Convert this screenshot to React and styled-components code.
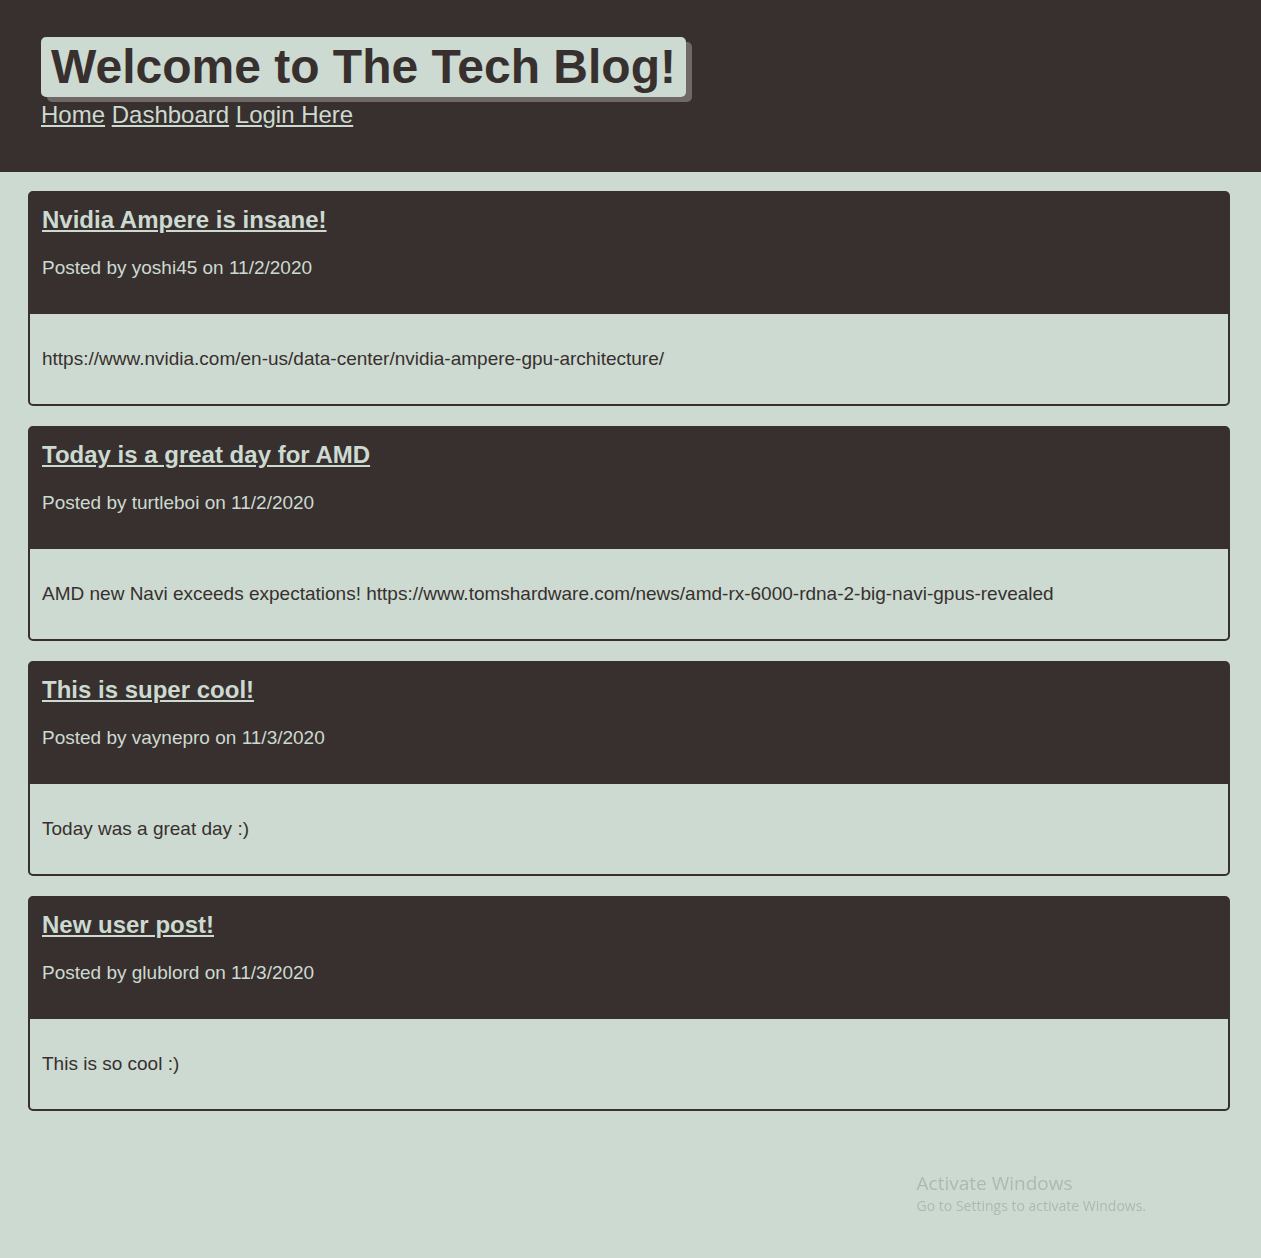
import React from "react";
import styled, { createGlobalStyle } from "styled-components";

const ink = "#38302e";
const sage = "#ccdad1";

const GlobalStyle = createGlobalStyle`
  *, *::before, *::after { box-sizing: border-box; }
  body {
    margin: 0;
    min-height: 100vh;
    background: ${sage};
    color: ${ink};
    font-family: "Liberation Sans", Arial, sans-serif;
  }
`;

const Header = styled.header`
  display: flex;
  flex-direction: column;
  align-items: flex-start;
  padding: 37px 41px 43px;
  background: ${ink};
`;

const SiteTitle = styled.h1`
  margin: 0;
  padding: 2px 10px;
  border-radius: 5px;
  background: ${sage};
  box-shadow: 6px 5px 0 #6f6866;
  font-size: 48px;
  line-height: 56px;
`;

const Nav = styled.nav`
  padding-top: 4px;
  font-size: 24px;
  line-height: 28px;
`;

const NavLink = styled.a`
  color: ${sage};
`;

const Posts = styled.main`
  display: flex;
  flex-direction: column;
  gap: 20px;
  padding: 19px 31px 148px 28px;
`;

const Card = styled.article`
  border: 2px solid ${ink};
  border-radius: 5px;
`;

const CardHeader = styled.header`
  padding: 13px 12px 33px;
  background: ${ink};
  color: ${sage};
`;

const PostTitle = styled.h2`
  margin: 0 0 21px;
  font-size: 24px;
  line-height: 28px;
`;

const PostLink = styled.a`
  color: inherit;
`;

const Meta = styled.p`
  margin: 0;
  font-size: 19px;
  line-height: 26px;
`;

const Body = styled.p`
  margin: 0;
  padding: 32px 12px;
  font-size: 19px;
  line-height: 26px;
  overflow-wrap: anywhere;
`;

const Watermark = styled.aside`
  position: fixed;
  right: 115px;
  bottom: 42px;
  color: #afb8b1;
  font-family: "Open Sans", "Noto Sans", sans-serif;
  pointer-events: none;
`;

const WatermarkTitle = styled.p`
  margin: 0;
  font-size: 19px;
  line-height: 26px;
`;

const WatermarkText = styled.p`
  margin: 0;
  font-size: 14px;
  line-height: 20px;
`;

const links = ["Home", "Dashboard", "Login Here"];

const posts = [
  {
    title: "Nvidia Ampere is insane!",
    author: "yoshi45",
    date: "11/2/2020",
    body: "https://www.nvidia.com/en-us/data-center/nvidia-ampere-gpu-architecture/",
  },
  {
    title: "Today is a great day for AMD",
    author: "turtleboi",
    date: "11/2/2020",
    body: "AMD new Navi exceeds expectations! https://www.tomshardware.com/news/amd-rx-6000-rdna-2-big-navi-gpus-revealed",
  },
  {
    title: "This is super cool!",
    author: "vaynepro",
    date: "11/3/2020",
    body: "Today was a great day :)",
  },
  {
    title: "New user post!",
    author: "glublord",
    date: "11/3/2020",
    body: "This is so cool :)",
  },
];

export default function App() {
  return (
    <>
      <GlobalStyle />
      <Header>
        <SiteTitle>Welcome to The Tech Blog!</SiteTitle>
        <Nav>
          {links.map((label) => (
            <React.Fragment key={label}>
              <NavLink href="#">{label}</NavLink>{" "}
            </React.Fragment>
          ))}
        </Nav>
      </Header>
      <Posts>
        {posts.map(({ title, author, date, body }) => (
          <Card key={title}>
            <CardHeader>
              <PostTitle>
                <PostLink href="#">{title}</PostLink>
              </PostTitle>
              <Meta>{`Posted by ${author} on ${date}`}</Meta>
            </CardHeader>
            <Body>{body}</Body>
          </Card>
        ))}
      </Posts>
      <Watermark>
        <WatermarkTitle>Activate Windows</WatermarkTitle>
        <WatermarkText>Go to Settings to activate Windows.</WatermarkText>
      </Watermark>
    </>
  );
}
